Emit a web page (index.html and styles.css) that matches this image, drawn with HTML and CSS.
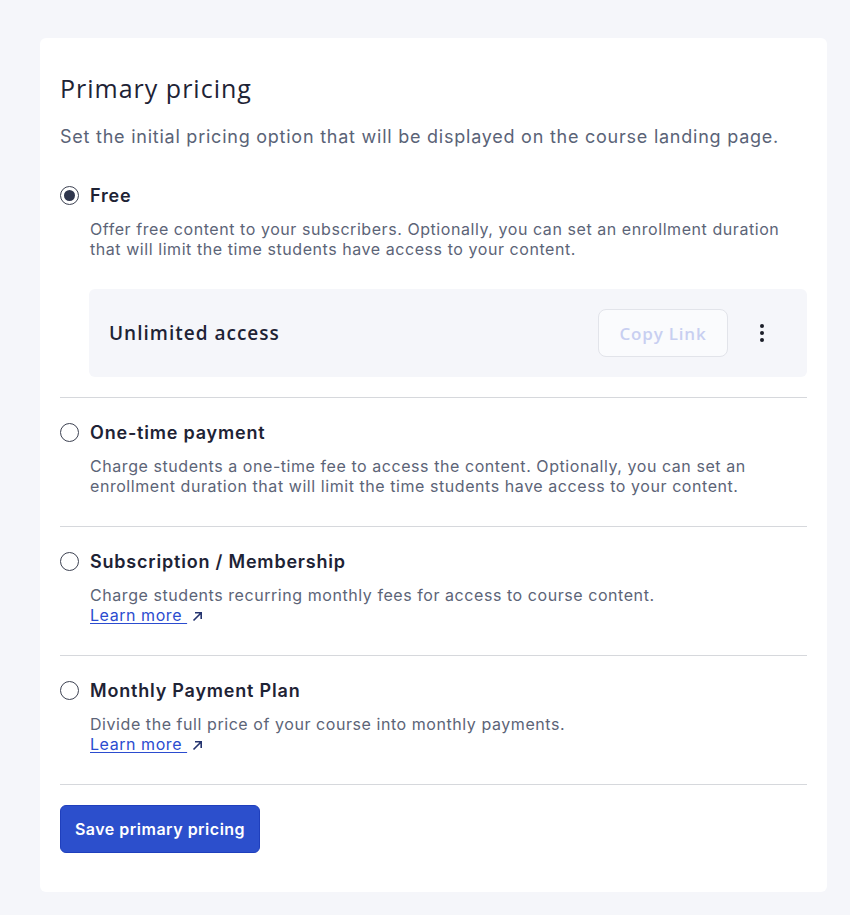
FILE: index.html
```html
<!DOCTYPE html>
<html lang="en">
<head>
<meta charset="utf-8">
<title>Primary pricing</title>
<link rel="stylesheet" href="styles.css">
</head>
<body>
<main class="card">
  <h1 class="title">Primary pricing</h1>
  <p class="subtitle">Set the initial pricing option that will be displayed on the course landing page.</p>

  <section class="option option--boxed">
    <label class="option-head">
      <span class="radio radio--checked"></span>
      <span class="option-label">Free</span>
    </label>
    <p class="option-desc">Offer free content to your subscribers. Optionally, you can set an enrollment duration that will limit the time students have access to your content.</p>
    <div class="access-box">
      <span class="access-title">Unlimited access</span>
      <div class="access-actions">
        <button class="copy-btn" disabled>Copy Link</button>
        <span class="kebab"><i></i><i></i><i></i></span>
      </div>
    </div>
  </section>

  <section class="option">
    <label class="option-head">
      <span class="radio"></span>
      <span class="option-label">One-time payment</span>
    </label>
    <p class="option-desc">Charge students a one-time fee to access the content. Optionally, you can set an enrollment duration that will limit the time students have access to your content.</p>
  </section>

  <section class="option">
    <label class="option-head">
      <span class="radio"></span>
      <span class="option-label">Subscription / Membership</span>
    </label>
    <p class="option-desc">Charge students recurring monthly fees for access to course content.<br><a class="learn" href="#">Learn more&nbsp;</a><svg class="ext" width="11" height="11" viewBox="0 0 11 11"><path d="M1.5 9.5 L9 2 M3 1.8 H9.2 V8" fill="none" stroke="currentColor" stroke-width="1.6"/></svg></p>
  </section>

  <section class="option">
    <label class="option-head">
      <span class="radio"></span>
      <span class="option-label">Monthly Payment Plan</span>
    </label>
    <p class="option-desc">Divide the full price of your course into monthly payments.<br><a class="learn" href="#">Learn more&nbsp;</a><svg class="ext" width="11" height="11" viewBox="0 0 11 11"><path d="M1.5 9.5 L9 2 M3 1.8 H9.2 V8" fill="none" stroke="currentColor" stroke-width="1.6"/></svg></p>
  </section>

  <button class="save-btn">Save primary pricing</button>
</main>
</body>
</html>
```
FILE: styles.css
```css
* { box-sizing: border-box; }
html, body { margin: 0; padding: 0; }
body {
  background: #f5f6fa;
  font-family: Inter, "Liberation Sans", sans-serif;
  color: #1f2436;
  padding: 38px 23px 22px 40px;
}
.card {
  background: #ffffff;
  border-radius: 6px;
  padding: 34px 20px 39px 20px;
}
.title {
  margin: 0;
  font-family: "Open Sans", "Liberation Sans", sans-serif;
  font-weight: 400;
  font-size: 25px;
  line-height: 32px;
  color: #1e2335;
  letter-spacing: 1px;
}
.subtitle {
  margin: 19px 0 10px;
  font-size: 18px;
  line-height: 28px;
  color: #5a6377;
  letter-spacing: 0.76px;
}
.option {
  padding: 20px 0 30px;
  border-bottom: 1px solid #d6d8dc;
}
.option--boxed { padding-bottom: 20px; }
.option-head {
  display: flex;
  align-items: center;
  gap: 11px;
  height: 28px;
}
.radio {
  width: 19px;
  height: 19px;
  border-radius: 50%;
  border: 1.5px solid #3d4252;
  display: flex;
  align-items: center;
  justify-content: center;
  flex: none;
}
.radio--checked::after {
  content: "";
  width: 11px;
  height: 11px;
  border-radius: 50%;
  background: #2f364d;
}
.option-label {
  font-size: 18px;
  font-weight: 600;
  color: #1e2335;
  letter-spacing: 0.8px;
}
.option-desc {
  margin: 10px 0 0 30px;
  font-size: 16px;
  line-height: 20px;
  color: #5c6477;
  letter-spacing: 0.56px;
}
.learn {
  color: #2b4ccf;
  text-decoration: underline;
  text-underline-offset: 2px;
}
.ext {
  color: #25346f;
  margin-left: 5px;
  vertical-align: -1px;
}
.access-box {
  margin: 30px 0 0 29px;
  height: 88px;
  background: #f5f6fa;
  border-radius: 6px;
  display: flex;
  align-items: center;
  justify-content: space-between;
  padding: 0 43px 0 20px;
}
.access-title {
  font-family: "Open Sans", "Liberation Sans", sans-serif;
  font-weight: 600;
  font-size: 19px;
  color: #1e2335;
  letter-spacing: 1px;
}
.access-actions {
  display: flex;
  align-items: center;
  gap: 32px;
}
.copy-btn {
  width: 130px;
  height: 48px;
  border: 1px solid #e2e4ea;
  border-radius: 8px;
  background: #fafbfd;
  font-family: "Open Sans", "Liberation Sans", sans-serif;
  font-weight: 600;
  font-size: 17px;
  color: #c8cff1;
  letter-spacing: 0.8px;
}
.kebab {
  display: flex;
  flex-direction: column;
  gap: 3px;
}
.kebab i {
  display: block;
  width: 4px;
  height: 4px;
  border-radius: 50%;
  background: #1b1e28;
}
.save-btn {
  margin-top: 20px;
  width: 200px;
  height: 48px;
  background: #2c4fcc;
  border: 1px solid #1f3fbd;
  border-radius: 6px;
  color: #ffffff;
  font-family: Inter, "Liberation Sans", sans-serif;
  font-weight: 600;
  font-size: 16px;
  letter-spacing: 0.5px;
}
```
